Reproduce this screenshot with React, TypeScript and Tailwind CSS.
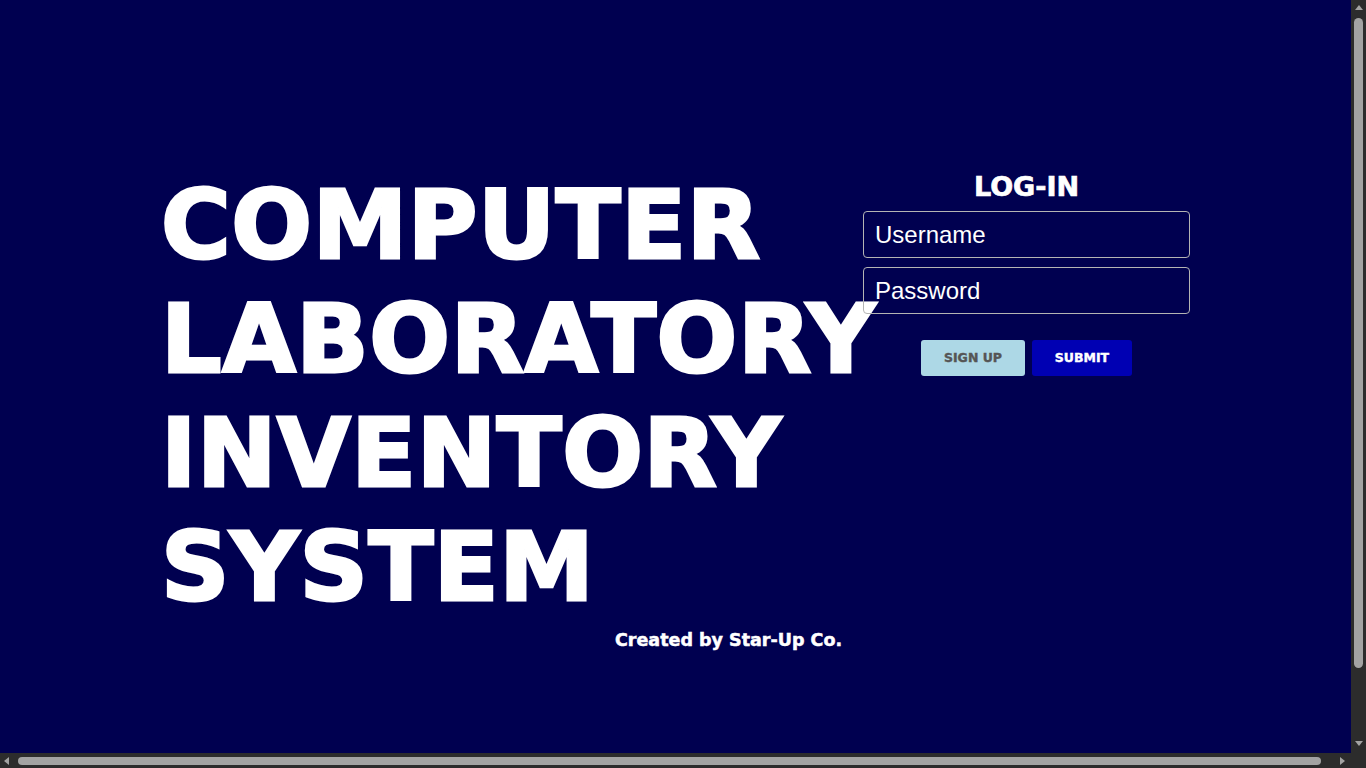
import React from "react";

function Tri({ dir }: { dir: "up" | "down" | "left" | "right" }) {
  const pts =
    dir === "up"
      ? "0,5 4,0 8,5"
      : dir === "down"
      ? "0,0 8,0 4,5"
      : dir === "left"
      ? "5,0 5,8 0,4"
      : "0,0 0,8 5,4";
  const w = dir === "up" || dir === "down" ? 8 : 5;
  const h = dir === "up" || dir === "down" ? 5 : 8;
  return (
    <svg width={w} height={h} viewBox={`0 0 ${w} ${h}`} className="shrink-0">
      <polygon points={pts} fill="#a3a3a3" />
    </svg>
  );
}

export default function App() {
  return (
    <div className="h-screen w-screen flex flex-col overflow-hidden bg-[#2c2c2c]">
      <div className="flex flex-1 min-h-0">
        <main className="flex-1 min-w-0 bg-[#000050] overflow-hidden">
          <div className="w-full pt-[168px] flex flex-col text-white">
            <div className="flex justify-center items-start">
              <div className="w-[702px]">
                <h1 className="font-['DejaVu_Sans'] font-bold text-[95px] leading-[114px] tracking-[0.6px] whitespace-nowrap text-white [-webkit-text-stroke:3px_white]">
                  COMPUTER
                  <br />
                  LABORATORY
                  <br />
                  INVENTORY
                  <br />
                  SYSTEM
                </h1>
              </div>
              <div className="w-[327px] mt-[5px] flex flex-col items-center">
                <h2 className="font-['DejaVu_Sans'] font-bold text-[27px] leading-[27px] mb-[11px] [-webkit-text-stroke:0.7px_white]">
                  LOG-IN
                </h2>
                <div className="w-full flex flex-col gap-[9px]">
                  <input
                    type="text"
                    placeholder="Username"
                    className="w-full h-[47px] rounded-[4px] border border-[#b4b4b4] bg-transparent pl-[11px] text-[24px] text-white placeholder:text-white outline-none font-['Liberation_Sans']"
                  />
                  <input
                    type="password"
                    placeholder="Password"
                    className="w-full h-[47px] rounded-[4px] border border-[#b4b4b4] bg-transparent pl-[11px] text-[24px] text-white placeholder:text-white outline-none font-['Liberation_Sans']"
                  />
                </div>
                <div className="flex gap-[7px] mt-[26px]">
                  <button className="w-[104px] h-[36px] rounded-[3px] bg-[#add8e6] text-[#555555] text-[12.5px] font-bold font-['DejaVu_Sans'] [-webkit-text-stroke:0.4px_#555555]">
                    SIGN UP
                  </button>
                  <button className="w-[100px] h-[36px] rounded-[3px] bg-[#0000b3] text-white text-[12.5px] font-bold font-['DejaVu_Sans'] [-webkit-text-stroke:0.4px_white]">
                    SUBMIT
                  </button>
                </div>
              </div>
            </div>
            <div className="pl-[615px] mt-[4px]">
              <p className="font-['DejaVu_Sans'] font-bold text-[17.5px] leading-[24px] whitespace-nowrap [-webkit-text-stroke:0.5px_white]">
                Created by Star-Up Co.
              </p>
            </div>
          </div>
        </main>
        <div className="w-[15px] bg-[#2c2c2c] flex flex-col items-center">
          <div className="pt-[5px] h-[18px]">
            <Tri dir="up" />
          </div>
          <div className="w-[9px] h-[650px] rounded-[5px] bg-[#a3a3a3]" />
          <div className="mt-[73px]">
            <Tri dir="down" />
          </div>
        </div>
      </div>
      <div className="h-[15px] flex shrink-0">
        <div className="flex-1 bg-[#2c2c2c] flex items-center pl-[4px]">
          <Tri dir="left" />
          <div className="ml-[9px] w-[1303px] h-[8px] rounded-[5px] bg-[#a3a3a3]" />
          <div className="ml-[19px]">
            <Tri dir="right" />
          </div>
        </div>
        <div className="w-[15px] bg-[#2c2c2c]" />
      </div>
    </div>
  );
}
